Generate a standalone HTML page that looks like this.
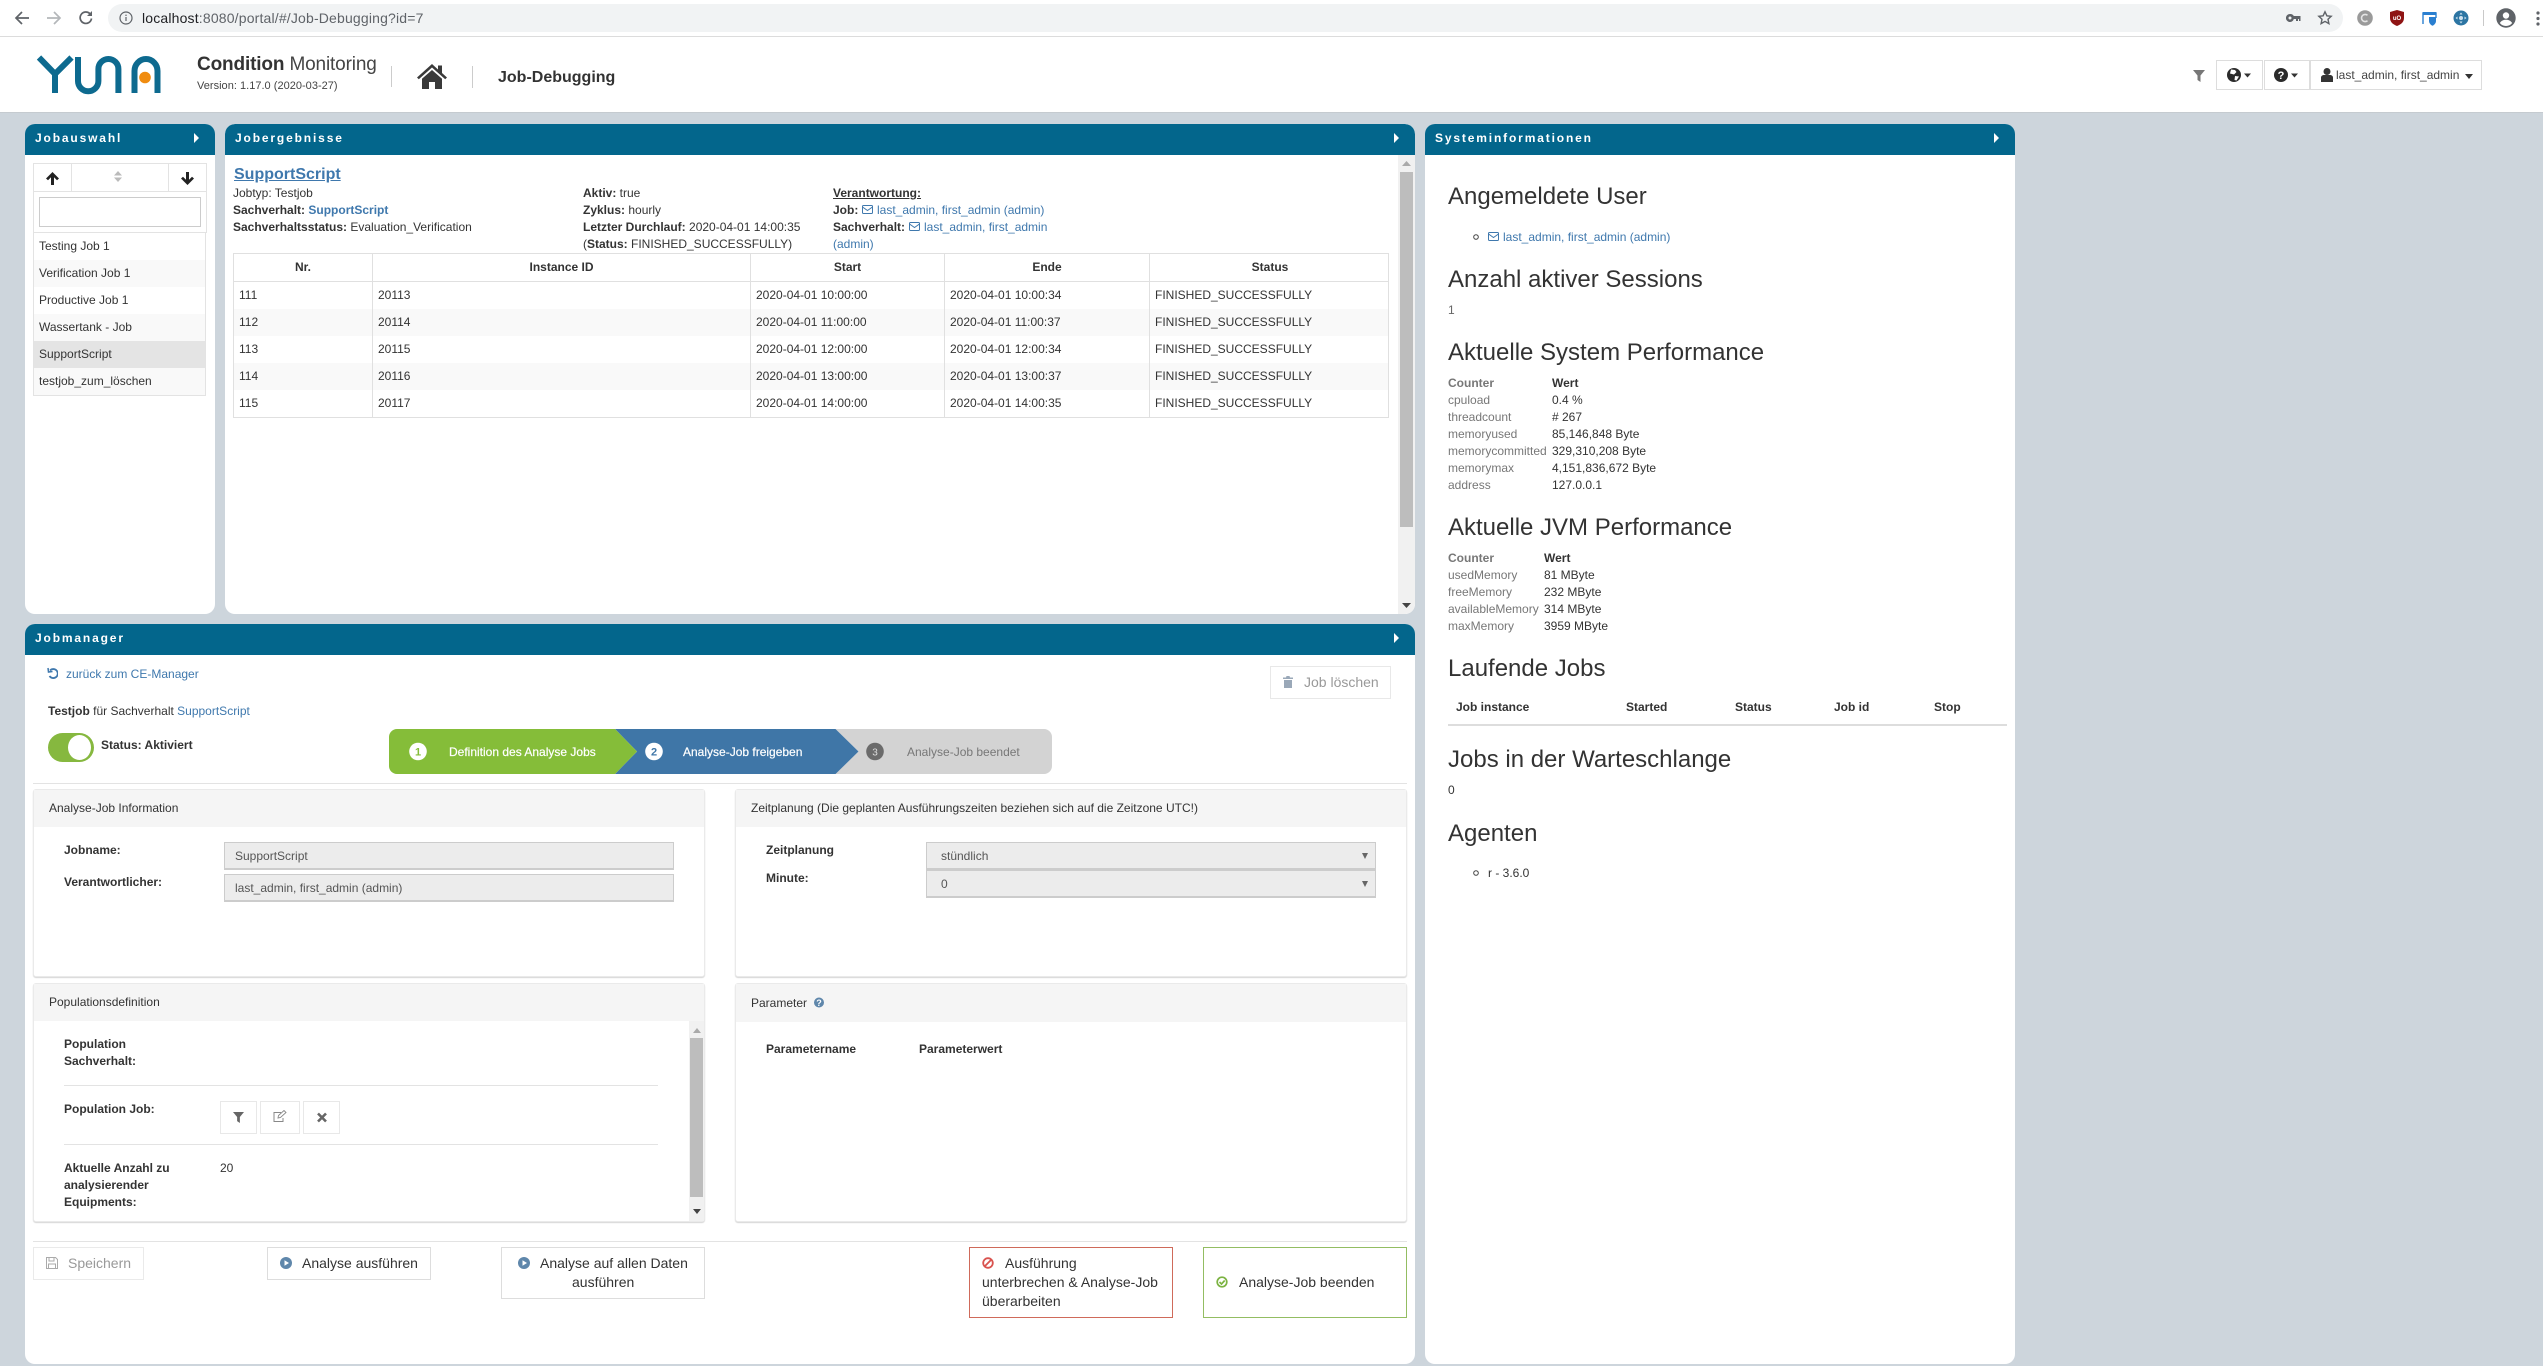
<!DOCTYPE html>
<html><head><meta charset="utf-8"><title>Job-Debugging</title>
<style>
html,body{margin:0;padding:0;width:2543px;height:1366px;overflow:hidden;background:#cdd5dc;font-family:"Liberation Sans",Arial,sans-serif;font-size:12px;color:#333}
body{filter:blur(.3px)}
div,svg{position:absolute;box-sizing:border-box}
.t{white-space:nowrap;line-height:20px;height:20px}
a{color:#3f78ad;text-decoration:none}
b{font-weight:700}
.ph{left:0;top:0;right:0;height:31px;background:#03668c;border-radius:10px 10px 0 0}
.pt{left:10px;top:4px;color:#fff;font-weight:700;font-size:12px;letter-spacing:1.85px;line-height:20px;white-space:nowrap}
.panel{background:#fff;border-radius:10px}
.tri{width:0;height:0;border-left:5px solid #fff;border-top:5px solid transparent;border-bottom:5px solid transparent}
.card{background:#fff;border-radius:3px;border:1px solid #eaeaea;box-shadow:0 1px 1px #d5d5d5}
.ch{left:0;right:0;top:0;background:#f5f5f5}
.btn{background:#fff;border:1px solid #ddd}
.inp{background:#ececec;border:1px solid #ccc;border-bottom:2px solid #ccc}
.h{font-size:24px;color:#333;line-height:30px;height:30px;white-space:nowrap}
.g{color:#777}
.sb{background:#f1f1f1}
.th{background:#bdbdbd}
.line{background:#e3e3e3;height:1px}
.tc{font-weight:700;text-align:center}
</style></head><body>

<!-- browser chrome -->
<div style="left:0;top:0;width:2543px;height:37px;background:#fff;border-bottom:1px solid #dcdcdc"></div>
<svg style="left:14px;top:10px" width="16" height="16" viewBox="0 0 16 16" fill="none" stroke="#5f6368" stroke-width="1.7"><path d="M15 8H2M8 2L2 8l6 6"/></svg>
<svg style="left:46px;top:10px" width="16" height="16" viewBox="0 0 16 16" fill="none" stroke="#b4b7ba" stroke-width="1.7"><path d="M1 8h13M8 2l6 6-6 6"/></svg>
<svg style="left:78px;top:10px" width="16" height="16" viewBox="0 0 16 16" fill="none" stroke="#5f6368" stroke-width="1.7"><path d="M13.5 8.5A5.7 5.7 0 1 1 12 3.8"/><path d="M14 1v5H9" fill="#5f6368" stroke="none"/></svg>
<div style="left:108px;top:4px;width:2235px;height:28px;background:#f1f3f4;border-radius:14px"></div>
<svg style="left:119px;top:11px" width="14" height="14" viewBox="0 0 14 14" fill="none" stroke="#5f6368" stroke-width="1.2"><circle cx="7" cy="7" r="6"/><path d="M7 6v4M7 3.6v1.4"/></svg>
<div class="t" style="left:142px;top:8px;font-size:14px;color:#5f6368;letter-spacing:.17px"><span style="color:#202124">localhost</span>:8080/portal/#/Job-Debugging?id=7</div>
<svg style="left:2286px;top:13px" width="15" height="10" viewBox="0 0 15 10" fill="#5f6368"><path d="M4 1a4 4 0 1 0 3.800 5H10v2h2V6h1v2h1.500V3H7.800A4 4 0 0 0 4 1zm0 2.500a1.500 1.500 0 1 1 0 3 1.500 1.500 0 0 1 0-3z"/></svg>
<svg style="left:2317px;top:10px" width="16" height="16" viewBox="0 0 16 16" fill="none" stroke="#5f6368" stroke-width="1.4"><path d="M8 1.800l1.900 4 4.300.5-3.200 3 .9 4.300L8 11.400l-3.900 2.200.9-4.300-3.200-3 4.300-.5z"/></svg>
<svg style="left:2357px;top:10px" width="16" height="16" viewBox="0 0 16 16"><circle cx="8" cy="8" r="7.800" fill="#9a9a9a"/><path d="M10.500 5.300A3.600 3.600 0 1 0 10.500 10.700" fill="none" stroke="#e5e5e5" stroke-width="1.600"/></svg>
<svg style="left:2390px;top:10px" width="14" height="16" viewBox="0 0 14 16"><path d="M0 2l7-2 7 2v6c0 4-3 6.500-7 8-4-1.500-7-4-7-8z" fill="#8f1414"/><text x="7" y="10" font-size="6" font-weight="700" fill="#fff" text-anchor="middle" font-family="Liberation Sans">uO</text></svg>
<svg style="left:2422px;top:11px" width="15" height="15" viewBox="0 0 15 15" fill="none"><path d="M1 13V2h13v5" stroke="#2a7fd0" stroke-width="1.400"/><rect x="1" y="1" width="13" height="3" fill="#2a7fd0"/><path d="M7 6h7v4c0 2.500-2 4-3.500 4.800C9 14 7 12.500 7 10z" fill="#2a7fd0"/></svg>
<svg style="left:2453px;top:10px" width="16" height="16" viewBox="0 0 16 16"><circle cx="8" cy="8" r="7.500" fill="#2c75a3"/><circle cx="8" cy="8" r="2" fill="#cfe2ef"/><path d="M8 2.500l1.500 2h-3zM8 13.500l1.500-2h-3zM2.500 8l2-1.500v3zM13.500 8l-2-1.500v3z" fill="#cfe2ef"/></svg>
<div style="left:2483px;top:10px;width:1px;height:16px;background:#c9c9c9"></div>
<svg style="left:2496px;top:8px" width="20" height="20" viewBox="0 0 20 20"><circle cx="10" cy="10" r="9.700" fill="#5f6368"/><circle cx="10" cy="7.500" r="3.200" fill="#fff"/><path d="M3.800 15c1.500-2.500 4-3.300 6.200-3.300s4.700.8 6.200 3.300A8 8 0 0 1 10 18a8 8 0 0 1-6.200-3z" fill="#fff"/></svg>
<svg style="left:2536px;top:11px" width="4" height="15" viewBox="0 0 4 15" fill="#5f6368"><circle cx="2" cy="2" r="1.600"/><circle cx="2" cy="7.500" r="1.600"/><circle cx="2" cy="13" r="1.600"/></svg>

<!-- app header -->
<div style="left:0;top:37px;width:2543px;height:76px;background:#fff;border-bottom:1px solid #c5cbd0"></div>
<svg style="left:30px;top:45px" width="140" height="60" viewBox="30 45 140 60" fill="none" stroke="#0d6a8f" stroke-width="6"><path d="M39 57.500L55 74 71.500 57.500M55 74V93"/><path d="M78 57V81A10.200 10.200 0 0 0 98.400 81V69A10 10 0 0 1 118.400 69V93"/><path d="M134.500 93V71A11.500 12 0 0 1 146 59 11.500 12 0 0 1 157.500 71V93"/><circle cx="145" cy="77.500" r="5.800" fill="#f08c10" stroke="none"/></svg>
<div class="t" style="left:197px;top:55px;font-size:19px;letter-spacing:-.15px"><b style="color:#333">Condition</b> <span style="color:#444">Monitoring</span></div>
<div class="t" style="left:197px;top:76px;font-size:11px;color:#444;letter-spacing:.02px">Version: 1.17.0 (2020-03-27)</div>
<div style="left:391px;top:66px;width:1px;height:21px;background:#ccc"></div>
<svg style="left:417px;top:64px" width="30" height="25" viewBox="0 0 30 25" fill="#3a3a3a"><path d="M15 0L0 13.500l1.800 1.700L15 3.500l13.200 11.700 1.800-1.700-5-4.500V1.500h-4V5.500z"/><path d="M15 6L5 14.800V25h7v-7h6v7h7V14.800z"/></svg>
<div style="left:472px;top:66px;width:1px;height:22px;background:#ccc"></div>
<div class="t" style="left:498px;top:67.500px;font-size:16px;font-weight:700;color:#333">Job-Debugging</div>
<svg style="left:2193px;top:70px" width="12" height="12" viewBox="0 0 12 12" fill="#777"><path d="M0 0H12L7.500 5.500V12L4.500 10V5.500Z"/></svg>
<div class="btn" style="left:2216px;top:60px;width:47px;height:30px"></div>
<div class="btn" style="left:2264px;top:60px;width:46px;height:30px"></div>
<div class="btn" style="left:2310px;top:60px;width:172px;height:30px"></div>
<svg style="left:2227px;top:68px" width="26" height="14" viewBox="0 0 26 14"><circle cx="7" cy="7" r="7" fill="#2b2b2b"/><path d="M4 1.500l4 .5 1.500 2-2.500 2.500-4-1zM8 8l4 .5-2.500 4-2-.5z" fill="#fff"/><path d="M17 5.500h7l-3.500 4z" fill="#333"/></svg>
<svg style="left:2274px;top:68px" width="26" height="14" viewBox="0 0 26 14"><circle cx="7" cy="7" r="7" fill="#2b2b2b"/><text x="7" y="11" font-size="11" font-weight="700" fill="#fff" text-anchor="middle" font-family="Liberation Sans">?</text><path d="M17 5.500h7l-3.500 4z" fill="#333"/></svg>
<svg style="left:2321px;top:68px" width="12" height="14" viewBox="0 0 12 14" fill="#333"><circle cx="6" cy="3.500" r="3.500"/><path d="M0 14V9.500C0 8 1.500 7 3 7h6c1.500 0 3 1 3 2.500V14z"/></svg>
<div class="t" style="left:2336px;top:65px;color:#444;font-size:12px">last_admin, first_admin</div>
<svg style="left:2465px;top:74px" width="8" height="5" viewBox="0 0 8 5" fill="#333"><path d="M0 0h8L4 5z"/></svg>

<!-- Jobauswahl -->
<div class="panel" style="left:25px;top:124px;width:190px;height:490px">
  <div class="ph"><div class="pt">Jobauswahl</div><div class="tri" style="left:169px;top:9px"></div></div>
</div>
<div style="left:33px;top:163px;width:174px;height:70px;border:1px solid #e3e3e3"></div>
<div style="left:34px;top:191px;width:172px;height:1px;background:#e3e3e3"></div>
<div style="left:71px;top:164px;width:1px;height:27px;background:#e3e3e3"></div>
<div style="left:168px;top:164px;width:1px;height:27px;background:#e3e3e3"></div>
<svg style="left:46px;top:172px" width="13" height="13" viewBox="0 0 13 13" fill="#222"><path d="M6.500 0L13 6.500 11 8.300 8 5.300V13H5V5.300L2 8.300 0 6.500z"/></svg>
<svg style="left:181px;top:172px" width="13" height="13" viewBox="0 0 13 13" fill="#222"><path d="M6.500 13L13 6.500 11 4.700 8 7.700V0H5V7.700L2 4.700 0 6.500z"/></svg>
<svg style="left:114px;top:171px" width="8" height="11" viewBox="0 0 8 11" fill="#bbb"><path d="M4 0L8 4.500H0zM4 11L0 6.500H8z"/></svg>
<div style="left:39px;top:197px;width:162px;height:30px;background:#fff;border:1px solid #ccc"></div>
<div style="left:33px;top:233px;width:173px;height:163px;border:1px solid #e3e3e3;border-top:0"></div>
<div style="left:34px;top:260px;width:171px;height:27px;background:#f9f9f9"></div>
<div style="left:34px;top:314px;width:171px;height:27px;background:#f9f9f9"></div>
<div style="left:34px;top:341px;width:171px;height:27px;background:#e4e4e4"></div>
<div style="left:34px;top:368px;width:171px;height:27px;background:#f9f9f9"></div>
<div class="t" style="left:39px;top:236px">Testing Job 1</div>
<div class="t" style="left:39px;top:263px">Verification Job 1</div>
<div class="t" style="left:39px;top:290px">Productive Job 1</div>
<div class="t" style="left:39px;top:317px">Wassertank - Job</div>
<div class="t" style="left:39px;top:344px">SupportScript</div>
<div class="t" style="left:39px;top:371px">testjob_zum_löschen</div>

<!-- Jobergebnisse -->
<div class="panel" style="left:225px;top:124px;width:1190px;height:490px;overflow:hidden">
  <div class="ph"><div class="pt">Jobergebnisse</div><div class="tri" style="left:1169px;top:9px"></div></div>
  <div class="sb" style="left:1173px;top:31px;width:17px;height:459px"></div>
  <div class="th" style="left:1175px;top:48px;width:13px;height:355px"></div>
  <svg style="left:1177px;top:37px" width="9" height="5" viewBox="0 0 9 5" fill="#aaa"><path d="M4.500 0L9 5H0z"/></svg>
  <svg style="left:1177px;top:479px" width="9" height="5" viewBox="0 0 9 5" fill="#444"><path d="M4.500 5L9 0H0z"/></svg>
</div>
<div class="t" style="left:234px;top:164.500px;font-size:16px;font-weight:700;text-decoration:underline;color:#3f78ad">SupportScript</div>
<div class="t" style="left:233px;top:183px">Jobtyp: Testjob</div>
<div class="t" style="left:233px;top:200px"><b>Sachverhalt:</b> <a><b>SupportScript</b></a></div>
<div class="t" style="left:233px;top:217px"><b>Sachverhaltsstatus:</b> Evaluation_Verification</div>
<div class="t" style="left:583px;top:183px"><b>Aktiv:</b> true</div>
<div class="t" style="left:583px;top:200px"><b>Zyklus:</b> hourly</div>
<div class="t" style="left:583px;top:217px"><b>Letzter Durchlauf:</b> 2020-04-01 14:00:35</div>
<div class="t" style="left:583px;top:234px">(<b>Status:</b> FINISHED_SUCCESSFULLY)</div>
<div class="t" style="left:833px;top:183px"><b style="text-decoration:underline">Verantwortung:</b></div>
<div class="t" style="left:833px;top:200px"><b>Job:</b></div>
<svg style="left:862px;top:205px" width="11" height="9" viewBox="0 0 11 9" fill="none" stroke="#3f78ad"><rect x=".5" y=".5" width="10" height="8" rx="1"/><path d="M.5 2l5 3.500 5-3.500"/></svg>
<div class="t" style="left:877px;top:200px"><a>last_admin, first_admin (admin)</a></div>
<div class="t" style="left:833px;top:217px"><b>Sachverhalt:</b></div>
<svg style="left:909px;top:222px" width="11" height="9" viewBox="0 0 11 9" fill="none" stroke="#3f78ad"><rect x=".5" y=".5" width="10" height="8" rx="1"/><path d="M.5 2l5 3.500 5-3.500"/></svg>
<div class="t" style="left:924px;top:217px"><a>last_admin, first_admin</a></div>
<div class="t" style="left:833px;top:234px"><a>(admin)</a></div>

<div style="left:233px;top:253px;width:1156px;height:165px;border:1px solid #e0e0e0"></div>
<div style="left:234px;top:281px;width:1154px;height:1px;background:#e0e0e0"></div>
<div style="left:234px;top:309px;width:1154px;height:27px;background:#f9f9f9"></div>
<div style="left:234px;top:363px;width:1154px;height:27px;background:#f9f9f9"></div>
<div style="left:372px;top:254px;width:1px;height:163px;background:#e0e0e0"></div>
<div style="left:750px;top:254px;width:1px;height:163px;background:#e0e0e0"></div>
<div style="left:944px;top:254px;width:1px;height:163px;background:#e0e0e0"></div>
<div style="left:1149px;top:254px;width:1px;height:163px;background:#e0e0e0"></div>
<div class="t tc" style="left:234px;top:257px;width:138px">Nr.</div>
<div class="t tc" style="left:373px;top:257px;width:377px">Instance ID</div>
<div class="t tc" style="left:751px;top:257px;width:193px">Start</div>
<div class="t tc" style="left:945px;top:257px;width:204px">Ende</div>
<div class="t tc" style="left:1151px;top:257px;width:238px">Status</div>

<div class="t" style="left:239px;top:285px">111</div><div class="t" style="left:378px;top:285px">20113</div><div class="t" style="left:756px;top:285px">2020-04-01 10:00:00</div><div class="t" style="left:950px;top:285px">2020-04-01 10:00:34</div><div class="t" style="left:1155px;top:285px">FINISHED_SUCCESSFULLY</div>
<div class="t" style="left:239px;top:312px">112</div><div class="t" style="left:378px;top:312px">20114</div><div class="t" style="left:756px;top:312px">2020-04-01 11:00:00</div><div class="t" style="left:950px;top:312px">2020-04-01 11:00:37</div><div class="t" style="left:1155px;top:312px">FINISHED_SUCCESSFULLY</div>
<div class="t" style="left:239px;top:339px">113</div><div class="t" style="left:378px;top:339px">20115</div><div class="t" style="left:756px;top:339px">2020-04-01 12:00:00</div><div class="t" style="left:950px;top:339px">2020-04-01 12:00:34</div><div class="t" style="left:1155px;top:339px">FINISHED_SUCCESSFULLY</div>
<div class="t" style="left:239px;top:366px">114</div><div class="t" style="left:378px;top:366px">20116</div><div class="t" style="left:756px;top:366px">2020-04-01 13:00:00</div><div class="t" style="left:950px;top:366px">2020-04-01 13:00:37</div><div class="t" style="left:1155px;top:366px">FINISHED_SUCCESSFULLY</div>
<div class="t" style="left:239px;top:393px">115</div><div class="t" style="left:378px;top:393px">20117</div><div class="t" style="left:756px;top:393px">2020-04-01 14:00:00</div><div class="t" style="left:950px;top:393px">2020-04-01 14:00:35</div><div class="t" style="left:1155px;top:393px">FINISHED_SUCCESSFULLY</div>

<!-- Systeminformationen -->
<div class="panel" style="left:1425px;top:124px;width:590px;height:1240px">
  <div class="ph"><div class="pt">Systeminformationen</div><div class="tri" style="left:569px;top:9px"></div></div>
</div>
<div class="h" style="left:1448px;top:182px">Angemeldete User</div>
<svg style="left:1473px;top:234px" width="6" height="6" viewBox="0 0 6 6" fill="none" stroke="#444"><circle cx="3" cy="3" r="2.300"/></svg>
<svg style="left:1488px;top:232px" width="11" height="9" viewBox="0 0 11 9" fill="none" stroke="#3f78ad"><rect x=".5" y=".5" width="10" height="8" rx="1"/><path d="M.5 2l5 3.500 5-3.500"/></svg>
<div class="t" style="left:1503px;top:227px"><a>last_admin, first_admin (admin)</a></div>
<div class="h" style="left:1448px;top:265px">Anzahl aktiver Sessions</div>
<div class="t" style="left:1448px;top:300px;color:#666">1</div>
<div class="h" style="left:1448px;top:338px">Aktuelle System Performance</div>
<div class="t g" style="left:1448px;top:373px;font-weight:700">Counter</div><div class="t" style="left:1552px;top:373px;font-weight:700">Wert</div>
<div class="t g" style="left:1448px;top:390px">cpuload</div><div class="t" style="left:1552px;top:390px">0.4 %</div>
<div class="t g" style="left:1448px;top:407px">threadcount</div><div class="t" style="left:1552px;top:407px"># 267</div>
<div class="t g" style="left:1448px;top:424px">memoryused</div><div class="t" style="left:1552px;top:424px">85,146,848 Byte</div>
<div class="t g" style="left:1448px;top:441px">memorycommitted</div><div class="t" style="left:1552px;top:441px">329,310,208 Byte</div>
<div class="t g" style="left:1448px;top:458px">memorymax</div><div class="t" style="left:1552px;top:458px">4,151,836,672 Byte</div>
<div class="t g" style="left:1448px;top:475px">address</div><div class="t" style="left:1552px;top:475px">127.0.0.1</div>
<div class="h" style="left:1448px;top:513px">Aktuelle JVM Performance</div>
<div class="t g" style="left:1448px;top:548px;font-weight:700">Counter</div><div class="t" style="left:1544px;top:548px;font-weight:700">Wert</div>
<div class="t g" style="left:1448px;top:565px">usedMemory</div><div class="t" style="left:1544px;top:565px">81 MByte</div>
<div class="t g" style="left:1448px;top:582px">freeMemory</div><div class="t" style="left:1544px;top:582px">232 MByte</div>
<div class="t g" style="left:1448px;top:599px">availableMemory</div><div class="t" style="left:1544px;top:599px">314 MByte</div>
<div class="t g" style="left:1448px;top:616px">maxMemory</div><div class="t" style="left:1544px;top:616px">3959 MByte</div>
<div class="h" style="left:1448px;top:654px">Laufende Jobs</div>
<div class="t" style="left:1456px;top:697px;font-weight:700">Job instance</div>
<div class="t" style="left:1626px;top:697px;font-weight:700">Started</div>
<div class="t" style="left:1735px;top:697px;font-weight:700">Status</div>
<div class="t" style="left:1834px;top:697px;font-weight:700">Job id</div>
<div class="t" style="left:1934px;top:697px;font-weight:700">Stop</div>
<div style="left:1448px;top:724px;width:559px;height:2px;background:#ddd"></div>
<div class="h" style="left:1448px;top:745px">Jobs in der Warteschlange</div>
<div class="t" style="left:1448px;top:780px">0</div>
<div class="h" style="left:1448px;top:819px">Agenten</div>
<svg style="left:1473px;top:870px" width="6" height="6" viewBox="0 0 6 6" fill="none" stroke="#444"><circle cx="3" cy="3" r="2.300"/></svg>
<div class="t" style="left:1488px;top:863px">r - 3.6.0</div>

<!-- Jobmanager -->
<div class="panel" style="left:25px;top:624px;width:1390px;height:740px">
  <div class="ph"><div class="pt">Jobmanager</div><div class="tri" style="left:1369px;top:9px"></div></div>
</div>
<svg style="left:47px;top:667px" width="11" height="12" viewBox="0 0 11 12" fill="none" stroke="#3f78ad" stroke-width="1.800"><path d="M3 3.500A4.500 4.500 0 1 1 2.500 9"/><path d="M1 1l.5 4 4-.5" stroke-width="1.500"/></svg>
<div class="t" style="left:66px;top:664px"><a>zurück zum CE-Manager</a></div>
<div class="btn" style="left:1270px;top:666px;width:121px;height:33px;border-color:#e8e8e8"></div>
<svg style="left:1283px;top:676px" width="10" height="12" viewBox="0 0 10 12" fill="#9aa8b8"><path d="M3.500 0h3l.5 1.500h3v1.500H0V1.500h3zM1 4h8v8H1z"/></svg>
<div class="t" style="left:1304px;top:672px;font-size:14px;color:#999">Job löschen</div>
<div class="t" style="left:48px;top:701px"><b>Testjob</b> für Sachverhalt <a>SupportScript</a></div>
<div style="left:48px;top:733px;width:46px;height:29px;border-radius:15px;background:#86b83f"></div>
<div style="left:68px;top:735px;width:23px;height:25px;border-radius:50%;background:#fff"></div>
<div class="t" style="left:101px;top:735px;font-weight:700">Status: Aktiviert</div>

<!-- wizard -->
<svg style="left:389px;top:729px" width="663" height="45" viewBox="0 0 663 45">
<path d="M469 0H655a8 8 0 0 1 8 8V37a8 8 0 0 1-8 8H446L469.500 22.500 446.500 0z" fill="#d3d3d3"/>
<path d="M226 0H446.500L469.500 22.500 446.500 45H226L248 22.500z" fill="#3f76a7"/>
<path d="M8 0H226L248 22.500 226 45H8a8 8 0 0 1-8-8V8a8 8 0 0 1 8-8z" fill="#85bd39"/>
<circle cx="29" cy="22.500" r="8.800" fill="#fff"/><circle cx="265" cy="22.500" r="8.800" fill="#fff"/><circle cx="486" cy="22.500" r="8.800" fill="#6b6b6b"/>
<text x="29" y="26.500" font-size="11" font-weight="700" fill="#85bd39" text-anchor="middle" font-family="Liberation Sans">1</text>
<text x="265" y="26.500" font-size="11" font-weight="700" fill="#3f76a7" text-anchor="middle" font-family="Liberation Sans">2</text>
<text x="486" y="26.500" font-size="10" fill="#ddd" text-anchor="middle" font-family="Liberation Sans">3</text>
</svg>
<div class="t" style="left:449px;top:742px;color:#fff;-webkit-text-stroke:.2px #fff">Definition des Analyse Jobs</div>
<div class="t" style="left:683px;top:742px;color:#fff;-webkit-text-stroke:.2px #fff">Analyse-Job freigeben</div>
<div class="t" style="left:907px;top:742px;color:#777">Analyse-Job beendet</div>
<div class="line" style="left:33px;top:783px;width:1374px"></div>

<!-- cards -->
<div class="card" style="left:33px;top:789px;width:672px;height:188px"><div class="ch" style="height:37px"></div></div>
<div class="t" style="left:49px;top:798px">Analyse-Job Information</div>
<div class="t" style="left:64px;top:840px;font-weight:700">Jobname:</div>
<div class="inp" style="left:224px;top:842px;width:450px;height:28px"></div>
<div class="t" style="left:235px;top:846px;color:#555">SupportScript</div>
<div class="t" style="left:64px;top:872px;font-weight:700">Verantwortlicher:</div>
<div class="inp" style="left:224px;top:874px;width:450px;height:28px"></div>
<div class="t" style="left:235px;top:878px;color:#555">last_admin, first_admin (admin)</div>

<div class="card" style="left:735px;top:789px;width:672px;height:188px"><div class="ch" style="height:37px"></div></div>
<div class="t" style="left:751px;top:798px">Zeitplanung (Die geplanten Ausführungszeiten beziehen sich auf die Zeitzone UTC!)</div>
<div class="t" style="left:766px;top:840px;font-weight:700">Zeitplanung</div>
<div class="inp" style="left:926px;top:842px;width:450px;height:28px"></div>
<div class="t" style="left:941px;top:846px;color:#555">stündlich</div>
<svg style="left:1362px;top:853px" width="6" height="6" viewBox="0 0 7 7" fill="#666"><path d="M0 0h7L3.500 7z"/></svg>
<div class="t" style="left:766px;top:868px;font-weight:700">Minute:</div>
<div class="inp" style="left:926px;top:870px;width:450px;height:28px"></div>
<div class="t" style="left:941px;top:874px;color:#555">0</div>
<svg style="left:1362px;top:881px" width="6" height="6" viewBox="0 0 7 7" fill="#666"><path d="M0 0h7L3.500 7z"/></svg>

<div class="card" style="left:33px;top:983px;width:672px;height:239px"><div class="ch" style="height:37px"></div>
  <div class="sb" style="left:655px;top:37px;width:15px;height:200px"></div>
  <div class="th" style="left:656px;top:54px;width:13px;height:159px"></div>
  <svg style="left:659px;top:44px" width="8" height="5" viewBox="0 0 8 5" fill="#aaa"><path d="M4 0l4 5H0z"/></svg>
  <svg style="left:659px;top:225px" width="8" height="5" viewBox="0 0 8 5" fill="#444"><path d="M4 5l4-5H0z"/></svg>
</div>
<div class="t" style="left:49px;top:992px">Populationsdefinition</div>
<div class="t" style="left:64px;top:1034px;font-weight:700">Population</div>
<div class="t" style="left:64px;top:1051px;font-weight:700">Sachverhalt:</div>
<div class="line" style="left:64px;top:1085px;width:594px"></div>
<div class="t" style="left:64px;top:1099px;font-weight:700">Population Job:</div>
<div class="btn" style="left:220px;top:1101px;width:37px;height:33px;border-color:#e8e8e8"></div>
<div class="btn" style="left:260px;top:1101px;width:40px;height:33px;border-color:#e8e8e8"></div>
<div class="btn" style="left:303px;top:1101px;width:37px;height:33px;border-color:#e8e8e8"></div>
<svg style="left:233px;top:1112px" width="11" height="11" viewBox="0 0 12 12" fill="#666"><path d="M0 0H12L7.500 5.500V12L4.500 10V5.500Z"/></svg>
<svg style="left:273px;top:1110px" width="14" height="13" viewBox="0 0 14 13" fill="none" stroke="#888"><path d="M10 8v3.500H1V2.500h7"/><path d="M5 8l.5-2.500L11 .5l2 2-5.500 5z" stroke-width=".9"/></svg>
<svg style="left:317px;top:1112px" width="10" height="11" viewBox="0 0 10 11" stroke="#666" stroke-width="2.600"><path d="M1 1.500l8 8M9 1.500l-8 8"/></svg>
<div class="line" style="left:64px;top:1144px;width:594px"></div>
<div class="t" style="left:64px;top:1158px;font-weight:700">Aktuelle Anzahl zu</div>
<div class="t" style="left:64px;top:1175px;font-weight:700">analysierender</div>
<div class="t" style="left:64px;top:1192px;font-weight:700">Equipments:</div>
<div class="t" style="left:220px;top:1158px">20</div>

<div class="card" style="left:735px;top:983px;width:672px;height:239px"><div class="ch" style="height:38px"></div></div>
<div class="t" style="left:751px;top:993px">Parameter</div>
<svg style="left:814px;top:997px" width="10" height="11" viewBox="0 0 10 11"><circle cx="5" cy="5.500" r="5" fill="#5f87ab"/><text x="5" y="9" font-size="9" font-weight="700" fill="#fff" text-anchor="middle" font-family="Liberation Sans">?</text></svg>
<div class="t" style="left:766px;top:1039px;font-weight:700">Parametername</div>
<div class="t" style="left:919px;top:1039px;font-weight:700">Parameterwert</div>

<div class="line" style="left:33px;top:1241px;width:1374px"></div>

<!-- bottom buttons -->
<div class="btn" style="left:33px;top:1247px;width:111px;height:33px;border-color:#eaeaea"></div>
<svg style="left:46px;top:1257px" width="12" height="12" viewBox="0 0 12 12" fill="none" stroke="#aaa"><path d="M.5.500h9l2 2v9H.5z"/><path d="M3 .5v3.500h5V.5M2.500 11.500V7h7v4.500"/></svg>
<div class="t" style="left:68px;top:1253px;font-size:14px;color:#999">Speichern</div>
<div class="btn" style="left:267px;top:1247px;width:164px;height:33px"></div>
<svg style="left:280px;top:1257px" width="12" height="12" viewBox="0 0 12 12"><circle cx="6" cy="6" r="6" fill="#5f87ab"/><path d="M4.500 3.200L9 6 4.500 8.800z" fill="#fff"/></svg>
<div class="t" style="left:302px;top:1253px;font-size:14px">Analyse ausführen</div>
<div class="btn" style="left:501px;top:1247px;width:204px;height:52px"></div>
<svg style="left:518px;top:1257px" width="12" height="12" viewBox="0 0 12 12"><circle cx="6" cy="6" r="6" fill="#5f87ab"/><path d="M4.500 3.200L9 6 4.500 8.800z" fill="#fff"/></svg>
<div class="t" style="left:540px;top:1253px;font-size:14px">Analyse auf allen Daten</div>
<div class="t" style="left:572px;top:1272px;font-size:14px">ausführen</div>
<div style="left:969px;top:1247px;width:204px;height:71px;background:#fff;border:1px solid #cf6a5a"></div>
<svg style="left:982px;top:1257px" width="12" height="12" viewBox="0 0 12 12" fill="none" stroke="#d9534f" stroke-width="1.800"><circle cx="6" cy="6" r="4.800"/><path d="M2.800 9.200l6.400-6.400"/></svg>
<div class="t" style="left:1005px;top:1253px;font-size:14px">Ausführung</div>
<div class="t" style="left:982px;top:1272px;font-size:14px">unterbrechen &amp; Analyse-Job</div>
<div class="t" style="left:982px;top:1291px;font-size:14px">überarbeiten</div>
<div style="left:1203px;top:1247px;width:204px;height:71px;background:#fff;border:1px solid #93bd62"></div>
<svg style="left:1216px;top:1276px" width="12" height="12" viewBox="0 0 12 12" fill="none" stroke="#7cb342" stroke-width="1.700"><circle cx="6" cy="6" r="4.800"/><path d="M3.500 6l2 2 3.200-3.500"/></svg>
<div class="t" style="left:1239px;top:1272px;font-size:14px">Analyse-Job beenden</div>
</body></html>
